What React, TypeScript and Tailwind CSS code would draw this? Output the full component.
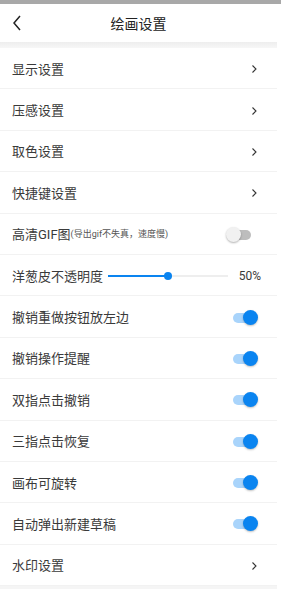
import { useState } from 'react'

type Row =
  | { kind: 'link'; label: string }
  | { kind: 'toggle'; label: string; note?: string; on: boolean }
  | { kind: 'slider'; label: string; value: number }

const rows: Row[] = [
  { kind: 'link', label: '显示设置' },
  { kind: 'link', label: '压感设置' },
  { kind: 'link', label: '取色设置' },
  { kind: 'link', label: '快捷键设置' },
  { kind: 'toggle', label: '高清GIF图', note: '(导出gif不失真，速度慢)', on: false },
  { kind: 'slider', label: '洋葱皮不透明度', value: 50 },
  { kind: 'toggle', label: '撤销重做按钮放左边', on: true },
  { kind: 'toggle', label: '撤销操作提醒', on: true },
  { kind: 'toggle', label: '双指点击撤销', on: true },
  { kind: 'toggle', label: '三指点击恢复', on: true },
  { kind: 'toggle', label: '画布可旋转', on: true },
  { kind: 'toggle', label: '自动弹出新建草稿', on: true },
  { kind: 'link', label: '水印设置' },
]

function Toggle({ on, onClick }: { on: boolean; onClick: () => void }) {
  return (
    <button onClick={onClick} className="relative w-[32px] h-[16px] mr-[3px]">
      <span
        className={`absolute left-[7px] top-[3px] w-[18px] h-[10px] rounded-full ${
          on ? 'bg-[#a9d4fb]' : 'bg-[#bdbdbd]'
        }`}
      />
      <span
        className={`absolute top-0 w-[15px] h-[15px] rounded-full ${
          on
            ? 'left-[17px] bg-[#0a84f0] shadow-[0_1px_2px_rgba(0,0,0,0.25)]'
            : 'left-0 bg-[#f1f1f1] shadow-[0_1px_2px_rgba(0,0,0,0.3)]'
        }`}
      />
    </button>
  )
}

function Chevron() {
  return (
    <svg width="7" height="10" viewBox="0 0 7 10" className="mr-[3px]">
      <path d="M1.5 1.5 L5 5 L1.5 8.5" fill="none" stroke="#333" strokeWidth="1.1" />
    </svg>
  )
}

export default function App() {
  const [state, setState] = useState(rows.map((r) => (r.kind === 'toggle' ? r.on : false)))

  return (
    <div
      className="w-[281px] h-[589px] bg-white overflow-hidden text-[#3a3a3a]"
      style={{ fontFamily: 'Roboto, "Noto Sans CJK SC", sans-serif' }}
    >
      <div className="h-[4px] bg-[#a8a8a8]" />
      {/* Header */}
      <div className="w-[277px] h-[38px] flex items-center relative">
        <svg width="10" height="16" viewBox="0 0 10 16" className="absolute left-[12px] top-[11px]">
          <path d="M8 1 L2 8 L8 15" fill="none" stroke="#222" strokeWidth="1.5" />
        </svg>
        <div className="flex-1 text-center text-[14px] text-[#222] pt-[2px]">绘画设置</div>
      </div>
      <div className="w-[277px] h-[6px] bg-gradient-to-b from-[#eeeeee] to-[#f7f7f7]" />

      {/* Rows */}
      <div className="w-[277px]">
        {rows.map((r, i) => (
          <div
            key={r.label}
            className="h-[41.4px] flex items-center pl-[12px] pr-[16px] pt-[2px] border-b border-[#f2f2f2]"
          >
            <div className="flex-1 flex items-center min-w-0">
              <span className="text-[13px] leading-none whitespace-nowrap">{r.label}</span>
              {r.kind === 'toggle' && r.note && (
                <span className="text-[9px] text-[#555] leading-none whitespace-nowrap">{r.note}</span>
              )}
              {r.kind === 'slider' && (
                <div className="flex items-center ml-[5px] w-[120px] relative h-[10px]">
                  <div className="absolute left-0 right-0 top-[4px] h-[2px] bg-[#eeeeee]" />
                  <div
                    className="absolute left-0 top-[4px] h-[2px] bg-[#0a84f0]"
                    style={{ width: `${r.value}%` }}
                  />
                  <div
                    className="absolute top-[1px] w-[8px] h-[8px] rounded-full bg-[#0a84f0]"
                    style={{ left: `calc(${r.value}% - 4px)` }}
                  />
                </div>
              )}
            </div>
            {r.kind === 'link' && <Chevron />}
            {r.kind === 'toggle' && (
              <Toggle
                on={state[i]}
                onClick={() => setState((s) => s.map((v, j) => (j === i ? !v : v)))}
              />
            )}
            {r.kind === 'slider' && <span className="text-[12px] leading-none">{r.value}%</span>}
          </div>
        ))}
      </div>
      <div className="w-[277px] h-[10px] bg-[#f5f5f5]" />
    </div>
  )
}
